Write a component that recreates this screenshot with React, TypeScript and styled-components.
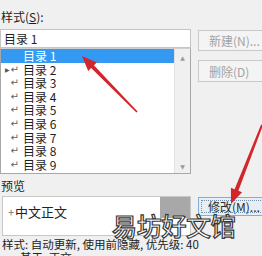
import React from "react";
import styled, { createGlobalStyle } from "styled-components";

const GlobalStyle = createGlobalStyle`
  html, body {
    margin: 0;
    padding: 0;
    background: #f0f0f0;
  }
  body {
    font-family: "Noto Sans CJK SC", "Noto Sans", sans-serif;
    font-size: 12px;
    color: #1e1e1e;
  }
`;

const Page = styled.div`
  position: relative;
  width: 262px;
  height: 256px;
  overflow: hidden;
  padding-top: 10px;
  box-sizing: border-box;
`;

const Label = styled.div<{ $top?: number }>`
  height: 14px;
  line-height: 14px;
  padding-left: 1px;
  margin-top: ${(p) => p.$top ?? 0}px;

  u {
    text-decoration-thickness: 1px;
    text-underline-offset: 1px;
  }
`;

const Row = styled.div<{ $top: number }>`
  display: grid;
  grid-template-columns: 191px 1fr;
  column-gap: 7px;
  margin-top: ${(p) => p.$top}px;
`;

const LeftCol = styled.div`
  display: flex;
  flex-direction: column;
`;

const Input = styled.div`
  height: 19px;
  box-sizing: border-box;
  background: #fff;
  border: 1px solid #c5c5c5;
  padding-left: 3px;
  line-height: 17px;
  font-size: 12px;
`;

const ListBox = styled.div`
  height: 126px;
  box-sizing: border-box;
  background: #fff;
  border: 1px solid #a8a8a8;
  border-top-color: #d0d0d0;
  display: flex;
`;

const Items = styled.div`
  flex: 1;
  display: flex;
  flex-direction: column;
`;

const Item = styled.div<{ $selected?: boolean }>`
  height: 13.6px;
  line-height: 13.6px;
  display: flex;
  align-items: center;
  font-size: 12px;
  background: ${(p) => (p.$selected ? "#3399f3" : "transparent")};
  color: ${(p) => (p.$selected ? "#fff" : "#1e1e1e")};
  position: relative;
`;

const Marker = styled.span`
  width: 22px;
  flex: none;
  position: relative;
  font-family: "DejaVu Sans", sans-serif;
  font-size: 10px;
  color: #5e5e5e;
  text-align: right;
  padding-right: 4px;
  box-sizing: border-box;
`;

const Caret = styled.span`
  position: absolute;
  left: 4px;
  top: 0;
  font-size: 6px;
  color: #555;
`;

const ScrollBar = styled.div`
  width: 15px;
  flex: none;
  background: #f0f0f0;
  border-left: 1px solid #e2e2e2;
  display: flex;
  flex-direction: column;
  justify-content: space-between;
  align-items: center;
  padding: 5px 0 3px;
  font-family: "DejaVu Sans", sans-serif;
  font-size: 6px;
  color: #9a9a9a;
`;

const Buttons = styled.div`
  display: flex;
  flex-direction: column;
`;

const Button = styled.div<{ $top: number; $h: number; $disabled?: boolean; $default?: boolean }>`
  margin-top: ${(p) => p.$top}px;
  height: ${(p) => p.$h}px;
  width: 72px;
  box-sizing: border-box;
  border: 1px solid ${(p) => (p.$default ? "#7fb0d8" : "#c9c9c9")};
  background: ${(p) => (p.$disabled ? "#f4f4f4" : "#e8eef3")};
  color: ${(p) => (p.$disabled ? "#a3a3a3" : "#2a2a2a")};
  font-size: 12px;
  display: flex;
  align-items: center;
  padding-left: ${(p) => (p.$default ? 9 : 10)}px;
  position: relative;

  ${(p) =>
    p.$default &&
    `
    &::after {
      content: "";
      position: absolute;
      inset: 2px;
      border: 1px dotted #6f8fae;
    }
  `}
`;

const PreviewBox = styled.div`
  height: 40px;
  box-sizing: border-box;
  background: #fff;
  border: 1px solid #c8c8c8;
  margin-left: 2px;
  display: flex;
  align-items: flex-start;
`;

const PreviewText = styled.div`
  flex: 1;
  padding: 7px 0 0 5px;
  font-size: 13px;
  line-height: 16px;
  color: #222;

  span {
    color: #777;
    font-size: 11px;
    margin-right: 1px;
  }
`;

const GrayBlock = styled.div`
  width: 30px;
  height: 21px;
  background: #a8a8a8;
`;

const Status = styled.div`
  margin-top: 1px;
  padding: 1px 0 0 2px;
  line-height: 13px;
  font-size: 11.5px;
  color: #222;

  div:last-child {
    padding-left: 18px;
  }
`;

const Overlay = styled.svg`
  position: absolute;
  left: 0;
  top: 0;
  pointer-events: none;
`;

const Watermark = styled.div`
  position: absolute;
  left: 112px;
  top: 208px;
  font-size: 25px;
  line-height: 34px;
  font-weight: 500;
  color: #fff;
  -webkit-text-stroke: 1.2px #383838;
  letter-spacing: -0.3px;
  white-space: nowrap;
`;

const entries = ["目录 1", "目录 2", "目录 3", "目录 4", "目录 5", "目录 6", "目录 7", "目录 8", "目录 9"];

export default function App() {
  return (
    <>
      <GlobalStyle />
      <Page>
        <Label>
          样式(<u>S</u>):
        </Label>
        <Row $top={5}>
          <LeftCol>
            <Input>目录 1</Input>
            <ListBox>
              <Items>
                {entries.map((name, i) => (
                  <Item key={name} $selected={i === 0}>
                    <Marker>
                      {i === 1 && <Caret>▶</Caret>}
                      {i === 0 ? "" : "↵"}
                    </Marker>
                    {name}
                  </Item>
                ))}
              </Items>
              <ScrollBar>
                <span>▲</span>
                <span>▼</span>
              </ScrollBar>
            </ListBox>
          </LeftCol>
          <Buttons>
            <Button $top={1} $h={21} $disabled>
              新建(N)...
            </Button>
            <Button $top={9} $h={22} $disabled>
              删除(D)
            </Button>
          </Buttons>
        </Row>
        <Label $top={5}>预览</Label>
        <Row $top={3}>
          <PreviewBox>
            <PreviewText>
              <span>+</span>中文正文
            </PreviewText>
            <GrayBlock />
          </PreviewBox>
          <Button $top={1} $h={19} $default>
            修改(M)...
          </Button>
        </Row>
        <Status>
          <div>样式: 自动更新, 使用前隐藏, 优先级: 40</div>
          <div>基于: 正文</div>
        </Status>
        <Watermark>易坊好文馆</Watermark>
        <Overlay width="262" height="256" viewBox="0 0 262 256">
          <polygon
            fill="#d3262c"
            points="137.6,111.4 93.9,65.3 96.8,62.5 82,56 88.2,70.9 91.1,68.1 136.4,112.6"
          />
          <polygon
            fill="#d3262c"
            points="262.9,125.4 238.4,190.7 242.1,192.2 231,204 230.9,187.8 234.6,189.3 261.1,124.6"
          />
        </Overlay>
      </Page>
    </>
  );
}
